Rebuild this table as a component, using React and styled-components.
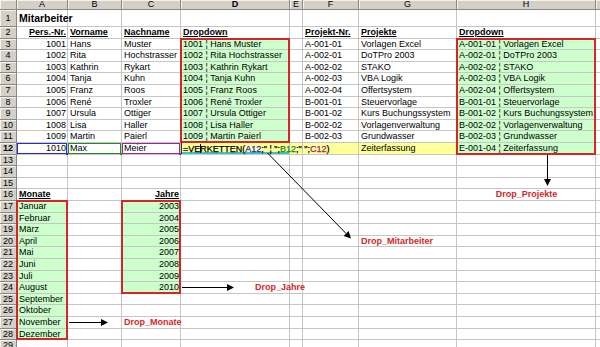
import React from 'react';
import styled, { createGlobalStyle, css } from 'styled-components';

const GlobalStyle = createGlobalStyle`
  html, body {
    margin: 0;
    padding: 0;
    background: #fff;
    overflow: hidden;
  }
  body {
    font-family: 'Liberation Sans', Arial, sans-serif;
  }
`;

const LETTERS = ['A', 'B', 'C', 'D', 'E', 'F', 'G', 'H', 'I'];
const COL_W = [17, 51, 54, 59, 109, 13, 56, 98, 139, 40];
const ROWS = 29;

// rows are ~11.6px high, rounded to whole pixels so gridlines stay crisp
const rowTop = (n) => Math.round(27 + (n - 2) * 11.6);
const ROW_H = Array.from({ length: ROWS }, (_, i) => {
  const n = i + 1;
  return n === 1 ? 17 : rowTop(n + 1) - rowTop(n);
});

const GREEN = '#ccffcc';
const YELLOW = '#ffff99';
const RED = '#d42626';

const employees = [
  [1001, 'Hans', 'Muster'],
  [1002, 'Rita', 'Hochstrasser'],
  [1003, 'Kathrin', 'Rykart'],
  [1004, 'Tanja', 'Kuhn'],
  [1005, 'Franz', 'Roos'],
  [1006, 'René', 'Troxler'],
  [1007, 'Ursula', 'Ottiger'],
  [1008, 'Lisa', 'Haller'],
  [1009, 'Martin', 'Paierl'],
  [1010, 'Max', 'Meier'],
];

const projects = [
  ['A-001-01', 'Vorlagen Excel'],
  ['A-002-01', 'DoTPro 2003'],
  ['A-002-02', 'STAKO'],
  ['A-002-03', 'VBA Logik'],
  ['A-002-04', 'Offertsystem'],
  ['B-001-01', 'Steuervorlage'],
  ['B-001-02', 'Kurs Buchungssystem'],
  ['B-002-02', 'Vorlagenverwaltung'],
  ['B-002-03', 'Grundwasser'],
  ['E-001-04', 'Zeiterfassung'],
];

const months = [
  'Januar', 'Februar', 'März', 'April', 'Mai', 'Juni',
  'Juli', 'August', 'September', 'Oktober', 'November', 'Dezember',
];

const Ref = styled.span`
  color: ${(p) => p.$color};
`;

const Caret = styled.span`
  display: inline-block;
  width: 0;
  height: 9px;
  vertical-align: -1px;
  border-left: 1px solid #000;
  margin: 0 -0.5px;
`;

const formula = (
  <>
    {'=VE'}
    <Caret />
    {'RKETTEN('}
    <Ref $color="#1a1ad0">A12</Ref>
    {';" ¦ ";'}
    <Ref $color="#138a13">B12</Ref>
    {';" ";'}
    <Ref $color="#9a1f7a">C12</Ref>
    {')'}
  </>
);

const data = {};
data.A1 = { v: 'Mitarbeiter', bold: true, big: true, over: true };
data.A2 = { v: 'Pers.-Nr.', bold: true, u: true, align: 'right' };
data.B2 = { v: 'Vorname', bold: true, u: true };
data.C2 = { v: 'Nachname', bold: true, u: true };
data.D2 = { v: 'Dropdown', bold: true, u: true };
data.F2 = { v: 'Projekt-Nr.', bold: true, u: true };
data.G2 = { v: 'Projekte', bold: true, u: true };
data.H2 = { v: 'Dropdown', bold: true, u: true };

employees.forEach(([nr, first, last], i) => {
  const r = i + 3;
  data['A' + r] = { v: nr, align: 'right' };
  data['B' + r] = { v: first };
  data['C' + r] = { v: last };
  if (r < 12) data['D' + r] = { v: `${nr} ¦ ${first} ${last}` };
});
data.D12 = { v: formula, over: true, thick: true };

projects.forEach(([nr, name], i) => {
  const r = i + 3;
  if (r < 12) data['F' + r] = { v: nr };
  data['G' + r] = { v: name };
  data['H' + r] = { v: `${nr} ¦ ${name}` };
});

data.A16 = { v: 'Monate', bold: true, u: true };
data.C16 = { v: 'Jahre', bold: true, u: true, align: 'right' };
months.forEach((m, i) => {
  data['A' + (i + 17)] = { v: m };
});
for (let y = 2003; y <= 2010; y++) {
  data['C' + (y - 2003 + 17)] = { v: y, align: 'right' };
}

data.H16 = { v: 'Drop_Projekte', label: true, align: 'center' };
data.G20 = { v: 'Drop_Mitarbeiter', label: true, over: true };
data.D24 = { v: 'Drop_Jahre', label: true, over: true, indent: 72 };
data.C27 = { v: 'Drop_Monate', label: true, over: true };

const rings = { A12: '#2a2ad0', B12: '#1a8f1a', C12: '#a21f9a' };

const inRange = (c, r, c0, c1, r0, r1) =>
  LETTERS.indexOf(c) >= LETTERS.indexOf(c0) &&
  LETTERS.indexOf(c) <= LETTERS.indexOf(c1) &&
  r >= r0 &&
  r <= r1;

const fillFor = (c, r) => {
  if (
    inRange(c, r, 'D', 'D', 3, 11) ||
    inRange(c, r, 'H', 'H', 3, 12) ||
    inRange(c, r, 'A', 'A', 17, 28) ||
    inRange(c, r, 'C', 'C', 17, 24)
  )
    return GREEN;
  if (inRange(c, r, 'D', 'G', 12, 12)) return YELLOW;
  return null;
};

const boxes = [
  { c: 'D', r: 3, rs: 9 },
  { c: 'H', r: 3, rs: 10 },
  { c: 'A', r: 17, rs: 12 },
  { c: 'C', r: 17, rs: 8 },
];

const Sheet = styled.div`
  position: relative;
  display: grid;
  grid-template-columns: ${COL_W.map((w) => w + 'px').join(' ')};
  grid-template-rows: 10px ${ROW_H.map((h) => h + 'px').join(' ')};
  width: 600px;
  height: 347px;
  overflow: hidden;
  font-size: 9px;
  color: #000;
`;

const headBase = css`
  box-sizing: border-box;
  background: #d4d0c8;
  border-right: 1px solid #8a8884;
  border-bottom: 1px solid #8a8884;
  box-shadow: inset 1px 1px 0 #f4f2ee;
  display: flex;
  align-items: center;
  justify-content: center;
  font-size: 9px;
  line-height: 1;
`;

const Corner = styled.div`
  ${headBase};
  grid-row: 1;
  grid-column: 1;
`;

const ColHead = styled.div`
  ${headBase};
  grid-row: 1;
  grid-column: ${(p) => p.$col};
  font-weight: ${(p) => (p.$active ? 'bold' : 'normal')};
`;

const RowHead = styled.div`
  ${headBase};
  grid-row: ${(p) => p.$row};
  grid-column: 1;
  font-weight: ${(p) => (p.$active ? 'bold' : 'normal')};
`;

const Cell = styled.div`
  position: relative;
  box-sizing: border-box;
  grid-row: ${(p) => p.$row};
  grid-column: ${(p) => p.$col};
  display: flex;
  align-items: center;
  justify-content: ${(p) =>
    p.$align === 'right' ? 'flex-end' : p.$align === 'center' ? 'center' : 'flex-start'};
  padding: 0 1px 0 ${(p) => 2 + (p.$indent || 0)}px;
  background: ${(p) => p.$bg || '#fff'};
  border-right: 1px solid #c6c6c6;
  border-bottom: 1px solid #c6c6c6;
  overflow: visible;
  line-height: 1;
  font-size: ${(p) => (p.$big ? '10.5px' : '9px')};
  font-weight: ${(p) => (p.$bold ? 'bold' : 'normal')};
  text-decoration: ${(p) => (p.$u ? 'underline' : 'none')};
  color: ${(p) => p.$color || '#000'};
  z-index: ${(p) => (p.$over ? 2 : 'auto')};
  -webkit-text-stroke: ${(p) => (p.$thick ? '0.25px' : '0')};

  ${(p) =>
    p.$ring &&
    css`
      box-shadow: inset 0 0 0 1px ${p.$ring};
      &::after {
        content: '';
        position: absolute;
        right: -2px;
        bottom: -2px;
        width: 3px;
        height: 3px;
        background: ${p.$ring};
      }
    `}

  ${(p) =>
    p.$edit &&
    css`
      box-shadow: inset 1px 0 0 #303030, inset 0 -2px 0 #3cc4c4;
    `}
`;

const Text = styled.span`
  flex: none;
  white-space: nowrap;
`;

const RangeBox = styled.div`
  position: relative;
  z-index: 3;
  grid-row: ${(p) => p.$row} / span ${(p) => p.$span};
  grid-column: ${(p) => p.$col};
  margin: -1px 0 0 -1px;
  border: 2px solid ${RED};
  pointer-events: none;
`;

const Arrows = styled.svg`
  position: absolute;
  left: 0;
  top: 0;
  z-index: 4;
  pointer-events: none;
`;

const Arrow = ({ x1, y1, x2, y2 }) => {
  const len = Math.hypot(x2 - x1, y2 - y1);
  const dx = (x2 - x1) / len;
  const dy = (y2 - y1) / len;
  const bx = x2 - dx * 7;
  const by = y2 - dy * 7;
  const px = -dy * 3.5;
  const py = dx * 3.5;
  return (
    <g>
      <line x1={x1} y1={y1} x2={bx} y2={by} stroke="#000" strokeWidth="1" />
      <polygon
        points={`${x2},${y2} ${bx + px},${by + py} ${bx - px},${by - py}`}
        fill="#000"
      />
    </g>
  );
};

const App = () => {
  const cells = [];
  for (let r = 1; r <= ROWS; r++) {
    LETTERS.forEach((c, ci) => {
      const ref = c + r;
      const d = data[ref] || {};
      cells.push(
        <Cell
          key={ref}
          $row={r + 1}
          $col={ci + 2}
          $bg={fillFor(c, r)}
          $align={d.align}
          $bold={d.bold || d.label}
          $u={d.u}
          $big={d.big}
          $color={d.label ? RED : null}
          $over={d.over}
          $indent={d.indent}
          $thick={d.thick}
          $ring={rings[ref]}
          $edit={ref === 'D12'}
        >
          {d.v !== undefined && <Text>{d.v}</Text>}
        </Cell>
      );
    });
  }

  return (
    <>
      <GlobalStyle />
      <Sheet>
        <Corner />
        {LETTERS.map((c, i) => (
          <ColHead key={c} $col={i + 2} $active={c === 'D'}>
            {c}
          </ColHead>
        ))}
        {Array.from({ length: ROWS }, (_, i) => (
          <RowHead key={i} $row={i + 2} $active={i + 1 === 12}>
            {i + 1}
          </RowHead>
        ))}
        {cells}
        {boxes.map((b) => (
          <RangeBox
            key={b.c + b.r}
            $row={b.r + 1}
            $span={b.rs}
            $col={LETTERS.indexOf(b.c) + 2}
          />
        ))}
        <Arrows width="600" height="347" viewBox="0 0 600 347">
          <Arrow x1={547.5} y1={155} x2={547.5} y2={186} />
          <Arrow x1={267.5} y1={153} x2={351} y2={238.5} />
          <Arrow x1={182} y1={287.5} x2={234} y2={287.5} />
          <Arrow x1={69} y1={322.5} x2={108} y2={322.5} />
        </Arrows>
      </Sheet>
    </>
  );
};

export default App;
